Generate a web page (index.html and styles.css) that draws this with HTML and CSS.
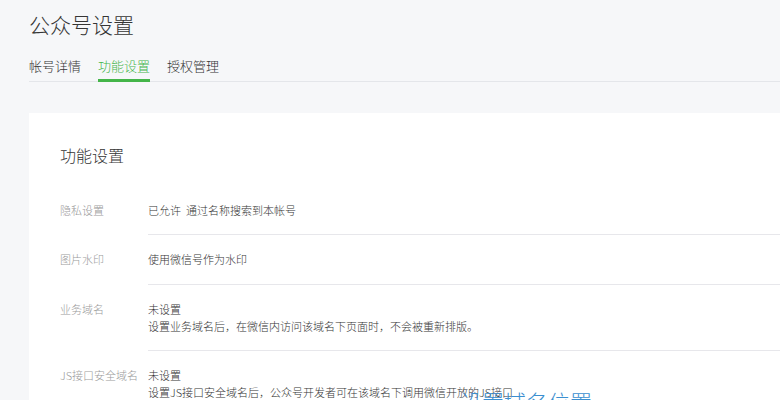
FILE: index.html
```html
<!DOCTYPE html>
<html lang="zh-CN">
<head>
<meta charset="utf-8">
<title>公众号设置</title>
<link rel="stylesheet" href="styles.css">
</head>
<body>
<div class="page">
  <h1 class="page-title">公众号设置</h1>
  <div class="tabs">
    <a class="tab">帐号详情</a>
    <a class="tab tab-active">功能设置</a>
    <a class="tab">授权管理</a>
  </div>
  <div class="card">
    <h2 class="card-title">功能设置</h2>
    <div class="rows">
      <div class="row">
        <div class="label">隐私设置</div>
        <div class="value">已允许<span class="gap"></span>通过名称搜索到本帐号</div>
      </div>
      <div class="row">
        <div class="label">图片水印</div>
        <div class="value">使用微信号作为水印</div>
      </div>
      <div class="row">
        <div class="label">业务域名</div>
        <div class="value">未设置<br>设置业务域名后，在微信内访问该域名下页面时，不会被重新排版。</div>
      </div>
      <div class="row">
        <div class="label">JS接口安全域名</div>
        <div class="value">未设置<br>设置JS接口安全域名后，公众号开发者可在该域名下调用微信开放的JS接口</div>
      </div>
    </div>
    <div class="overlay-note">设置域名位置</div>
  </div>
</div>
</body>
</html>
```

FILE: styles.css
```css
* { box-sizing: border-box; }
html, body {
  margin: 0;
  padding: 0;
  background: #f6f7f9;
  font-family: "Noto Sans CJK SC", "Microsoft YaHei", sans-serif;
  font-weight: 300;
  color: #353535;
  overflow: hidden;
  height: 400px;
}
.page {
  padding-left: 29px;
}
.page-title {
  margin: 9px 0 0;
  font-size: 21px;
  line-height: 30px;
  font-weight: 300;
  color: #353535;
}
.tabs {
  display: flex;
  gap: 17px;
  margin-top: 17px;
  border-bottom: 1px solid #e4e6ea;
}
.tab {
  font-size: 13px;
  line-height: 20px;
  padding-bottom: 3px;
  border-bottom: 3px solid transparent;
  margin-bottom: -1px;
  color: #353535;
  cursor: pointer;
}
.tab-active {
  color: #44b549;
  border-bottom-color: #44b549;
}
.card {
  position: relative;
  margin-top: 31px;
  background: #fff;
  padding: 30px 0 0 31px;
  height: 400px;
}
.card-title {
  margin: 0;
  font-size: 16px;
  line-height: 24px;
  font-weight: 300;
  color: #353535;
}
.rows {
  margin-top: 18.5px;
}
.row {
  display: grid;
  grid-template-columns: 88px 1fr;
  font-size: 11px;
  line-height: 17px;
}
.label {
  color: #9a9a9a;
  padding-top: 16px;
  white-space: nowrap;
}
.value {
  color: #353535;
  padding: 16px 0 15.5px;
  border-bottom: 1px solid #e7e7eb;
  white-space: nowrap;
}
.gap {
  display: inline-block;
  width: 5px;
}
.overlay-note {
  position: absolute;
  left: 431px;
  top: 275px;
  font-size: 22px;
  line-height: 26px;
  color: #3b8fd0;
  white-space: nowrap;
}
```
